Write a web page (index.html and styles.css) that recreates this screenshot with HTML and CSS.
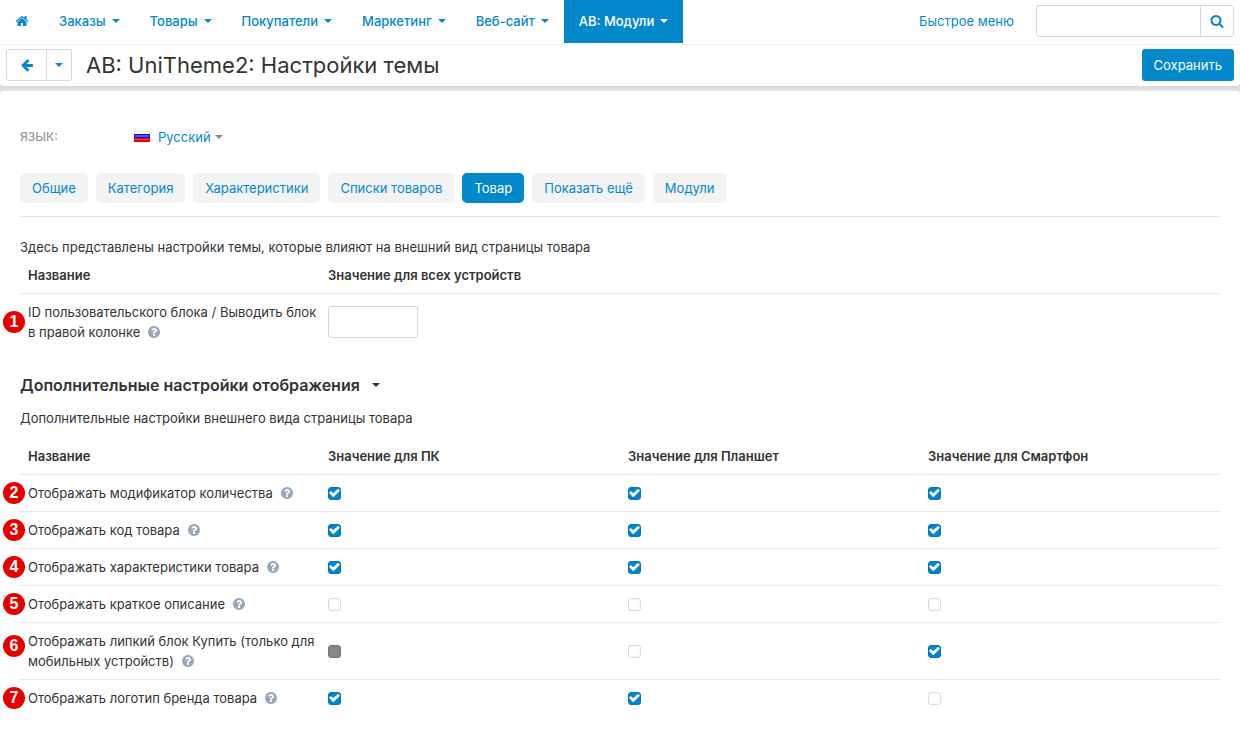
FILE: index.html
```html
<!DOCTYPE html>
<html lang="ru">
<head>
<meta charset="utf-8">
<meta name="viewport" content="width=device-width, initial-scale=1">
<title>AB: UniTheme2: Настройки темы</title>
<link rel="stylesheet" href="styles.css">
</head>
<body>
<svg class="sprite" aria-hidden="true">
  <symbol id="i-home" viewBox="0 0 1792 1792"><path d="M1472 992v480q0 26-19 45t-45 19h-384v-384h-256v384h-384q-26 0-45-19t-19-45v-480q0-1 .5-3t.5-3l575-474 575 474q1 2 1 6zm223-69l-62 74q-8 9-21 11h-3q-13 0-21-7l-692-577-692 577q-12 8-24 7-13-2-21-11l-62-74q-8-10-7-23.5t11-21.5l719-599q32-26 76-26t76 26l244 204v-195q0-14 9-23t23-9h192q14 0 23 9t9 23v408l219 182q10 8 11 21.5t-7 23.5z"/></symbol>
  <symbol id="i-back" viewBox="0 0 1792 1792"><path d="M1664 896v128q0 53-32.5 90.5t-84.5 37.5h-704l293 294q38 36 38 90t-38 90l-75 76q-37 37-90 37-52 0-91-37l-651-652q-37-37-37-90 0-52 37-91l651-650q38-38 91-38 52 0 90 38l75 74q38 38 38 91t-38 91l-293 293h704q52 0 84.5 37.5t32.5 90.5z"/></symbol>
  <symbol id="i-search" viewBox="0 0 1792 1792"><path d="M1216 832q0-185-131.5-316.5t-316.5-131.5-316.5 131.5-131.5 316.5 131.5 316.5 316.5 131.5 316.5-131.5 131.5-316.5zm512 832q0 52-38 90t-90 38q-54 0-90-38l-343-342q-179 124-399 124-143 0-273.5-55.5t-225-150-150-225-55.5-273.5 55.5-273.5 150-225 225-150 273.5-55.5 273.5 55.5 225 150 150 225 55.5 273.5q0 220-124 399l343 343q37 37 37 90z"/></symbol>
  <symbol id="i-help" viewBox="128 128 1536 1536"><path d="M1024 1376v-192q0-14-9-23t-23-9h-192q-14 0-23 9t-9 23v192q0 14 9 23t23 9h192q14 0 23-9t9-23zm256-672q0-88-55.5-163t-138.5-116-170-41q-243 0-371 213-15 24 8 42l132 100q7 6 19 6 16 0 25-12 53-68 86-92 34-24 86-24 48 0 85.5 26t37.5 59q0 38-20 61t-68 45q-63 28-115.5 86.5t-52.5 125.5v36q0 14 9 23t23 9h192q14 0 23-9t9-23q0-19 21.5-49.5t54.5-49.5q32-18 49-28.5t46-35 44.5-48 28-60.5 12.5-81zm384 192q0 209-103 385.5t-279.5 279.5-385.5 103-385.5-103-279.5-279.5-103-385.5 103-385.5 279.5-279.5 385.5-103 385.5 103 279.5 279.5 103 385.5z"/></symbol>
</svg>

<header class="header">
  <div class="topbar">
    <nav class="menu">
      <a class="menu-home" href="#" aria-label="Главная"><svg class="icon"><use href="#i-home"/></svg></a>
      <a class="menu-item" href="#">Заказы<span class="caret"></span></a>
      <a class="menu-item" href="#">Товары<span class="caret"></span></a>
      <a class="menu-item" href="#">Покупатели<span class="caret"></span></a>
      <a class="menu-item" href="#">Маркетинг<span class="caret"></span></a>
      <a class="menu-item" href="#">Веб-сайт<span class="caret"></span></a>
      <a class="menu-item menu-item-active" href="#">AB: Модули<span class="caret"></span></a>
    </nav>
    <a class="quick-menu" href="#">Быстрое меню</a>
    <form class="search">
      <input class="search-input" type="text" aria-label="Поиск">
      <button class="search-button" type="button" aria-label="Найти"><svg class="icon"><use href="#i-search"/></svg></button>
    </form>
  </div>
  <div class="titlebar">
    <div class="back-group">
      <button class="back-button" type="button" aria-label="Назад"><svg class="icon"><use href="#i-back"/></svg></button>
      <button class="back-button back-more" type="button" aria-label="История"><span class="caret"></span></button>
    </div>
    <h1 class="title">AB: UniTheme2: Настройки темы</h1>
    <button class="save" type="button">Сохранить</button>
  </div>
</header>

<main class="content">
  <div class="language">
    <span class="language-label">язык:</span>
    <svg class="flag" viewBox="0 0 16 11" aria-hidden="true"><path fill="#ececf0" d="M0 0h16v4H0z"/><path fill="#fafafc" d="M1 1h14v2H1z"/><path fill="#1212e8" d="M0 3h16v5H0z"/><path fill="#5050f4" d="M1 4h14v2H1z"/><path fill="#e80000" d="M0 7h16v4H0z"/><path fill="#ff4040" d="M1 8h14v1H1z"/></svg>
    <a class="language-link" href="#">Русский<span class="caret"></span></a>
  </div>

  <nav class="tabs">
    <a class="tab" href="#">Общие</a>
    <a class="tab" href="#">Категория</a>
    <a class="tab" href="#">Характеристики</a>
    <a class="tab" href="#">Списки товаров</a>
    <a class="tab tab-active" href="#">Товар</a>
    <a class="tab" href="#">Показать ещё</a>
    <a class="tab" href="#">Модули</a>
  </nav>

  <p class="note">Здесь представлены настройки темы, которые влияют на внешний вид страницы товара</p>
  <table class="settings">
    <thead><tr><th>Название</th><th colspan="3">Значение для всех устройств</th></tr></thead>
    <tbody>
      <tr>
        <td><span class="badge">1</span><label for="block-id">ID пользовательского блока / Выводить блок в правой колонке</label><svg class="help"><use href="#i-help"/></svg></td>
        <td colspan="3"><input class="field" id="block-id" type="text"></td>
      </tr>
    </tbody>
  </table>

  <h2 class="section">Дополнительные настройки отображения<span class="caret"></span></h2>
  <p class="note">Дополнительные настройки внешнего вида страницы товара</p>
  <table class="settings settings-devices">
    <thead><tr><th>Название</th><th id="pc">Значение для ПК</th><th id="tablet">Значение для Планшет</th><th id="phone">Значение для Смартфон</th></tr></thead>
    <tbody>
      <tr>
        <td><span class="badge">2</span><span id="r2">Отображать модификатор количества</span><svg class="help"><use href="#i-help"/></svg></td>
        <td><input class="check" type="checkbox" aria-labelledby="r2 pc" checked></td>
        <td><input class="check" type="checkbox" aria-labelledby="r2 tablet" checked></td>
        <td><input class="check" type="checkbox" aria-labelledby="r2 phone" checked></td>
      </tr>
      <tr>
        <td><span class="badge">3</span><span id="r3">Отображать код товара</span><svg class="help"><use href="#i-help"/></svg></td>
        <td><input class="check" type="checkbox" aria-labelledby="r3 pc" checked></td>
        <td><input class="check" type="checkbox" aria-labelledby="r3 tablet" checked></td>
        <td><input class="check" type="checkbox" aria-labelledby="r3 phone" checked></td>
      </tr>
      <tr>
        <td><span class="badge">4</span><span id="r4">Отображать характеристики товара</span><svg class="help"><use href="#i-help"/></svg></td>
        <td><input class="check" type="checkbox" aria-labelledby="r4 pc" checked></td>
        <td><input class="check" type="checkbox" aria-labelledby="r4 tablet" checked></td>
        <td><input class="check" type="checkbox" aria-labelledby="r4 phone" checked></td>
      </tr>
      <tr>
        <td><span class="badge">5</span><span id="r5">Отображать краткое описание</span><svg class="help"><use href="#i-help"/></svg></td>
        <td><input class="check" type="checkbox" aria-labelledby="r5 pc"></td>
        <td><input class="check" type="checkbox" aria-labelledby="r5 tablet"></td>
        <td><input class="check" type="checkbox" aria-labelledby="r5 phone"></td>
      </tr>
      <tr>
        <td><span class="badge badge-upper">6</span><span id="r6">Отображать липкий блок Купить (только для мобильных устройств)</span><svg class="help"><use href="#i-help"/></svg></td>
        <td><input class="check" type="checkbox" aria-labelledby="r6 pc" disabled></td>
        <td><input class="check" type="checkbox" aria-labelledby="r6 tablet"></td>
        <td><input class="check" type="checkbox" aria-labelledby="r6 phone" checked></td>
      </tr>
      <tr>
        <td><span class="badge">7</span><span id="r7">Отображать логотип бренда товара</span><svg class="help"><use href="#i-help"/></svg></td>
        <td><input class="check" type="checkbox" aria-labelledby="r7 pc" checked></td>
        <td><input class="check" type="checkbox" aria-labelledby="r7 tablet" checked></td>
        <td><input class="check" type="checkbox" aria-labelledby="r7 phone"></td>
      </tr>
    </tbody>
  </table>
</main>
</body>
</html>
```
FILE: styles.css
```css
:root {
  --blue: #0388cc;
  --ink: #333;
  --edge: #d0dae3;
}

* { box-sizing: border-box; }

body {
  margin: 0;
  background: #e3e6e8;
  color: var(--ink);
  font: 13px/20px Inter, "Liberation Sans", sans-serif;
}

a { color: var(--blue); text-decoration: none; }
button, input { font: inherit; margin: 0; }

.sprite { position: absolute; width: 0; height: 0; }

.icon {
  display: block;
  width: 14px;
  height: 14px;
  fill: var(--blue);
}

.caret {
  display: inline-block;
  border: 4px solid transparent;
  border-top-color: currentColor;
  border-bottom-width: 0;
  vertical-align: middle;
}

/* Header */
.header {
  background: #fff;
  border-radius: 0 0 4px 4px;
  box-shadow: 0 1px 4px rgba(0, 0, 0, 0.1);
}

.topbar {
  display: flex;
  align-items: center;
  height: 45px;
  padding-right: 6px;
  border-bottom: 1px solid #f3f3f3;
}

.menu { display: flex; align-self: flex-start; font-weight: 500; }
.menu-home { padding: 14px 15px 15px; }

.menu-item {
  display: flex;
  align-items: center;
  gap: 6px;
  height: 43px;
  padding: 0 15px 1px;
  white-space: nowrap;
}

.menu-item-active { background: var(--blue); color: #fff; }
.quick-menu { margin-left: auto; padding-bottom: 2px; white-space: nowrap; }

.search {
  display: flex;
  width: 198px;
  height: 32px;
  margin: 0 0 2px 22px;
  border: 1px solid var(--edge);
  border-radius: 3px;
}

.search-input { flex: 1; min-width: 0; border: 0; background: none; }

.search-button {
  display: grid;
  place-items: center;
  width: 33px;
  padding: 0;
  border: 0;
  border-left: 1px solid var(--edge);
  background: none;
}

.titlebar {
  display: flex;
  align-items: center;
  padding: 3px 6px 5px;
}

.back-group {
  display: flex;
  height: 32px;
  border: 1px solid var(--edge);
  border-radius: 3px;
}

.back-button {
  display: grid;
  place-items: center;
  width: 39px;
  padding: 0;
  border: 0;
  background: none;
  color: var(--blue);
}

.back-more { width: 25px; border-left: 1px solid var(--edge); }

.title {
  flex: 1;
  margin: 0 14px;
  font-size: 22px;
  font-weight: 400;
  line-height: 32px;
}

.save {
  height: 32px;
  margin-top: 1px;
  padding: 0 12px;
  border: 0;
  border-radius: 3px;
  background: var(--blue);
  color: #fff;
}

/* Content */
.content {
  min-height: calc(100vh - 91px);
  margin-top: 5px;
  padding: 36px 20px 16px;
  border-radius: 4px 4px 0 0;
  background: #fff;
}

.language { display: flex; align-items: center; }

.language-label {
  width: 114px;
  color: #999;
  font-size: 12px;
  font-weight: 500;
  text-transform: uppercase;
}

.flag { width: 16px; height: 11px; margin: 0 8px 2px 0; }
.language-link { display: flex; align-items: center; gap: 4px; }
.language-link .caret { color: #888; }

.tabs {
  display: flex;
  gap: 8px;
  margin: 26px 0 20px;
  padding-bottom: 13px;
  border-bottom: 1px solid #dfe4ef;
}

.tab {
  padding: 5px 12px;
  border-radius: 5px;
  background: #f3f3f3;
  white-space: nowrap;
}

.tab-active { background: var(--blue); color: #fff; }
.note { margin: 0; }

.settings {
  width: 100%;
  border-collapse: collapse;
  table-layout: fixed;
}

.settings th, .settings td {
  position: relative;
  padding: 8px 0 8px 8px;
  text-align: left;
  vertical-align: middle;
}

.settings th { font-weight: 600; border-bottom: 1px solid #ebebeb; }
.settings tr + tr td { border-top: 1px solid #ebebeb; }
.settings td:first-child, .settings th:first-child { width: 25%; }
.settings-devices { margin-top: 10px; }

.help {
  width: 12px;
  height: 12px;
  margin-left: 8px;
  fill: #98a8b8;
  vertical-align: -1px;
}

.field {
  display: block;
  width: 90px;
  height: 32px;
  border: 1px solid var(--edge);
  border-radius: 3px;
}

.section {
  display: flex;
  align-items: center;
  gap: 12px;
  margin: 25px 0 13px;
  font-size: 16px;
  font-weight: 600;
  line-height: 20px;
}

.badge {
  position: absolute;
  top: calc(50% - 11px);
  left: -17px;
  width: 22px;
  height: 22px;
  border-radius: 50%;
  background: #e60000;
  color: #fff;
  font-family: "Liberation Sans", Arial, sans-serif;
  font-size: 16px;
  font-weight: 700;
  line-height: 22px;
  text-align: center;
}

/* Sits nearer the first line of a two-line label */
.badge-upper { top: 12px; }

.check {
  display: grid;
  place-items: center;
  width: 13px;
  height: 13px;
  appearance: none;
  border: 1px solid #ddd;
  border-radius: 3px;
  background: #fff;
  box-shadow: inset 0 0 2px rgba(0, 0, 0, 0.1);
}

.check:checked { border-color: #0078b8; background: var(--blue); }
.check:disabled { border-color: #777; background: #888; }

.check:checked::after {
  content: "";
  width: 11px;
  height: 9px;
  background: #fff;
  clip-path: polygon(0 48%, 16% 28%, 38% 52%, 82% 4%, 100% 24%, 38% 96%);
}
```
